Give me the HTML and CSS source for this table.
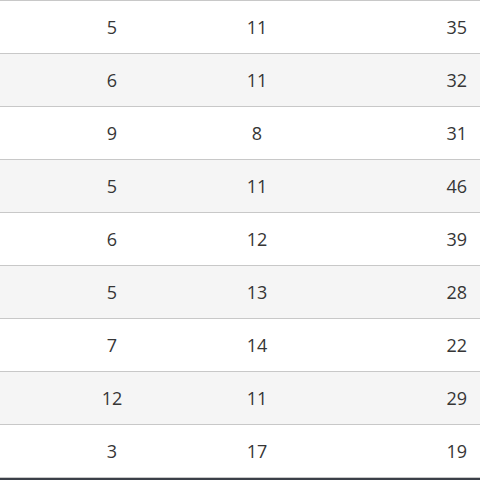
FILE: index.html
```html
<!DOCTYPE html>
<html>
<head>
<meta charset="utf-8">
<link rel="stylesheet" href="styles.css">
</head>
<body>
<table class="data">
  <tbody>
    <tr><td class="c1">5</td><td class="c2">11</td><td class="c3">35</td></tr>
    <tr><td class="c1">6</td><td class="c2">11</td><td class="c3">32</td></tr>
    <tr><td class="c1">9</td><td class="c2">8</td><td class="c3">31</td></tr>
    <tr><td class="c1">5</td><td class="c2">11</td><td class="c3">46</td></tr>
    <tr><td class="c1">6</td><td class="c2">12</td><td class="c3">39</td></tr>
    <tr><td class="c1">5</td><td class="c2">13</td><td class="c3">28</td></tr>
    <tr><td class="c1">7</td><td class="c2">14</td><td class="c3">22</td></tr>
    <tr><td class="c1">12</td><td class="c2">11</td><td class="c3">29</td></tr>
    <tr><td class="c1">3</td><td class="c2">17</td><td class="c3">19</td></tr>
  </tbody>
</table>
<div class="bar"></div>
</body>
</html>
```

FILE: styles.css
```css
html, body {
  margin: 0;
  padding: 0;
  background: #ffffff;
}
body {
  font-family: "Open Sans", "Noto Sans", sans-serif;
  font-size: 18px;
  color: #363636;
  overflow: hidden;
}
.data {
  width: 480px;
  border-collapse: collapse;
  table-layout: fixed;
  border-top: 1px solid #c8c8c8;
}
.data tr {
  height: 53px;
}
.data tr:nth-child(even) {
  background: #f5f5f5;
}
.data td {
  padding: 0;
  height: 52px;
  border-bottom: 1px solid #c8c8c8;
  vertical-align: middle;
}
.c1 {
  width: 224px;
  text-align: center;
}
.c2 {
  width: 66px;
  text-align: center;
}
.data .c3 {
  text-align: right;
  padding-right: 13px;
}
.bar {
  height: 2px;
  background: #3b4049;
}
```
